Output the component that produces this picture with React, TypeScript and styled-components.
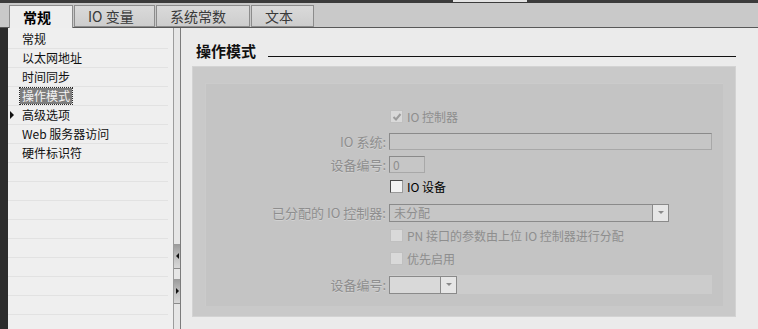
import React from 'react'
import styled, { createGlobalStyle } from 'styled-components'

const GlobalStyle = createGlobalStyle`
  html, body {
    margin: 0;
    padding: 0;
    background: #ebebeb;
  }
  body {
    font-family: "Noto Sans CJK SC", "Liberation Sans", sans-serif;
    font-size: 12px;
  }
`

const View = styled.div`
  width: 758px;
  height: 329px;
  display: flex;
  flex-direction: column;
  overflow: hidden;
  background: #ebebeb;
`

const TopBar = styled.div`
  height: 3px;
  background: #3b3b3b;
  display: flex;
`

const TopNotch = styled.div`
  margin-left: 453px;
  width: 74px;
  height: 2px;
  background: #e4e4e4;
`

const TabBar = styled.div`
  height: 24px;
  background: #c9c9c9;
  border-bottom: 1px solid #585858;
  display: flex;
  align-items: flex-end;
  padding-left: 9px;
  gap: 1px;
`

const Tab = styled.div<{ $active?: boolean; $w: number }>`
  box-sizing: border-box;
  height: ${(p) => (p.$active ? '23px' : '22px')};
  margin-bottom: ${(p) => (p.$active ? '-1px' : '0')};
  width: ${(p) => p.$w}px;
  padding-left: 13px;
  display: flex;
  align-items: center;
  font-size: 14px;
  font-weight: ${(p) => (p.$active ? 700 : 400)};
  color: ${(p) => (p.$active ? '#000' : '#3a3a3a')};
  background: ${(p) => (p.$active ? '#eeeeee' : 'linear-gradient(#dadada, #cdcdcd)')};
  border: 1px solid #8c8c8c;
  border-bottom: ${(p) => (p.$active ? 'none' : '1px solid #8c8c8c')};
`

const Body = styled.div`
  flex: 1;
  display: flex;
  min-height: 0;
`

const LeftEdge = styled.div`
  width: 8px;
  background: #2c2c2c;
`

const Nav = styled.div`
  width: 165px;
  background: #efefef;
  padding-top: 2px;
  box-sizing: border-box;
`

const NavRow = styled.div`
  width: 160px;
  height: 19px;
  box-sizing: border-box;
  border-bottom: 1px solid #e2e2e2;
  display: flex;
  align-items: center;
  position: relative;
  color: #000;
  font-size: 12px;
  white-space: nowrap;
`

const NavText = styled.span<{ $selected?: boolean }>`
  margin-left: ${(p) => (p.$selected ? '12px' : '14px')};
  padding: 0 ${(p) => (p.$selected ? '2px' : '0')};
  height: 16px;
  line-height: 16px;
  background: ${(p) => (p.$selected ? '#7e7e7e' : 'transparent')};
  color: ${(p) => (p.$selected ? '#f4f4f4' : '#111')};
  outline: ${(p) => (p.$selected ? '1px dotted #2a2a2a' : 'none')};
`

const Caret = styled.span`
  position: absolute;
  left: 2px;
  top: 5px;
  width: 0;
  height: 0;
  border-top: 4px solid transparent;
  border-bottom: 4px solid transparent;
  border-left: 4px solid #111;
`

const Splitter = styled.div`
  width: 8px;
  box-sizing: border-box;
  background: #e6e6e6;
  border-left: 1px solid #9c9c9c;
  border-right: 1px solid #7c7c7c;
  display: flex;
  flex-direction: column;
  padding-top: 216px;
  gap: 10px;
`

const SplitButton = styled.div<{ $dir: 'left' | 'right' }>`
  height: 24px;
  background: linear-gradient(#9a9a9a, #c4c4c4 60%, #d8d8d8);
  border-bottom: 1px solid #8a8a8a;
  display: flex;
  align-items: center;
  justify-content: center;
  &::after {
    content: '';
    width: 0;
    height: 0;
    border-top: 3px solid transparent;
    border-bottom: 3px solid transparent;
    ${(p) => (p.$dir === 'left' ? 'border-right: 3px solid #111;' : 'border-left: 3px solid #111;')}
  }
`

const Content = styled.div`
  flex: 1;
  display: flex;
  flex-direction: column;
  padding: 15px 22px 12px 11px;
  background: #ebebeb;
  min-width: 0;
`

const TitleRow = styled.div`
  display: flex;
  align-items: flex-end;
  gap: 12px;
  padding-left: 4px;
  height: 15px;
  margin-bottom: 8px;
`

const Title = styled.div`
  font-size: 15px;
  font-weight: 700;
  line-height: 15px;
  color: #111;
`

const TitleLine = styled.div`
  flex: 1;
  border-bottom: 1px solid #111;
  margin-bottom: 1px;
`

const OuterBox = styled.div`
  flex: 1;
  display: flex;
  flex-direction: column;
  background: #c9c9c9;
  border: 1px solid #d3d3d3;
  padding: 16px 12px 10px 12px;
`

const InnerBox = styled.div`
  flex: 1;
  background: #c4c4c4;
  border-top: 1px solid #cbcbcb;
  border-left: 1px solid #cbcbcb;
  padding-top: 24px;
  padding-right: 11px;
  display: flex;
  flex-direction: column;
`

const FormRow = styled.div<{ $top: number; $h?: number }>`
  display: grid;
  grid-template-columns: 183px 1fr;
  height: ${(p) => p.$h ?? 17}px;
  margin-top: ${(p) => p.$top}px;
  align-items: center;
`

const Label = styled.div`
  text-align: right;
  padding-right: 3px;
  color: #8e8e8e;
  font-size: 13px;
  white-space: nowrap;
  text-shadow: 0 1px 0 #d2d2d2;
`

const CheckLine = styled.label<{ $enabled?: boolean }>`
  display: flex;
  align-items: center;
  gap: 4px;
  padding-left: 1px;
  color: ${(p) => (p.$enabled ? '#000' : '#8e8e8e')};
  font-size: 12px;
  white-space: nowrap;
`

const Box = styled.span<{ $enabled?: boolean }>`
  width: 13px;
  height: 13px;
  box-sizing: border-box;
  display: inline-flex;
  align-items: center;
  justify-content: center;
  background: ${(p) => (p.$enabled ? '#f2f2f2' : '#d9d9d9')};
  border: 1px solid ${(p) => (p.$enabled ? '#4a4a4a' : '#c0c0c0')};
  border-right-color: ${(p) => (p.$enabled ? '#9a9a9a' : '#c0c0c0')};
  border-bottom-color: ${(p) => (p.$enabled ? '#9a9a9a' : '#c0c0c0')};
`

const Field = styled.div<{ $w?: number }>`
  box-sizing: border-box;
  height: 17px;
  width: ${(p) => (p.$w ? `${p.$w}px` : '100%')};
  border: 1px solid #8a8a8a;
  border-right-color: #a8a8a8;
  border-bottom-color: #a8a8a8;
  background: #c6c6c6;
  color: #8e8e8e;
  display: flex;
  align-items: center;
  padding-left: 3px;
  font-size: 12px;
`

const Select = styled.div<{ $w: number; $light?: boolean }>`
  box-sizing: border-box;
  height: 18px;
  width: ${(p) => p.$w}px;
  border: 1px solid #8a8a8a;
  background: ${(p) => (p.$light ? '#d9d9d9' : '#c6c6c6')};
  color: #8e8e8e;
  display: flex;
  align-items: center;
  font-size: 12px;
`

const SelectText = styled.span`
  flex: 1;
  padding-left: 4px;
`

const DropButton = styled.span`
  width: 16px;
  height: 100%;
  box-sizing: border-box;
  border-left: 1px solid #8a8a8a;
  background: #e6e6e6;
  display: flex;
  align-items: center;
  justify-content: center;
  &::after {
    content: '';
    width: 0;
    height: 0;
    border-left: 3px solid transparent;
    border-right: 3px solid transparent;
    border-top: 3px solid #8a8a8a;
  }
`

const Band = styled.div`
  height: 19px;
  background: #cccccc;
  display: flex;
  align-items: center;
`

const Check = () => (
  <svg width="10" height="10" viewBox="0 0 10 10">
    <path d="M1.5 5 L4 7.5 L8.5 2" fill="none" stroke="#9c9c9c" strokeWidth="2" />
  </svg>
)

const navItems = ['常规', '以太网地址', '时间同步', '操作模式', '高级选项', 'Web 服务器访问', '硬件标识符']

const App: React.FC = () => {
  return (
    <View>
      <GlobalStyle />
      <TopBar>
        <TopNotch />
      </TopBar>
      <TabBar>
        <Tab $active $w={64}>常规</Tab>
        <Tab $w={81}>IO 变量</Tab>
        <Tab $w={94}>系统常数</Tab>
        <Tab $w={63}>文本</Tab>
      </TabBar>
      <Body>
        <LeftEdge />
        <Nav>
          {navItems.map((item) => (
            <NavRow key={item}>
              {item === '高级选项' && <Caret />}
              <NavText $selected={item === '操作模式'}>{item}</NavText>
            </NavRow>
          ))}
          {Array.from({ length: 9 }).map((_, i) => (
            <NavRow key={'e' + i} />
          ))}
        </Nav>
        <Splitter>
          <SplitButton $dir="left" />
          <SplitButton $dir="right" />
        </Splitter>
        <Content>
          <TitleRow>
            <Title>操作模式</Title>
            <TitleLine />
          </TitleRow>
          <OuterBox>
            <InnerBox>
              <FormRow $top={0}>
                <span />
                <CheckLine>
                  <Box>
                    <Check />
                  </Box>
                  IO 控制器
                </CheckLine>
              </FormRow>
              <FormRow $top={7}>
                <Label>IO 系统:</Label>
                <Field />
              </FormRow>
              <FormRow $top={6}>
                <Label>设备编号:</Label>
                <Field $w={36}>0</Field>
              </FormRow>
              <FormRow $top={6}>
                <span />
                <CheckLine $enabled>
                  <Box $enabled />
                  IO 设备
                </CheckLine>
              </FormRow>
              <FormRow $top={8} $h={18}>
                <Label>已分配的 IO 控制器:</Label>
                <Select $w={280}>
                  <SelectText>未分配</SelectText>
                  <DropButton />
                </Select>
              </FormRow>
              <FormRow $top={5} $h={18}>
                <span />
                <CheckLine>
                  <Box />
                  PN 接口的参数由上位 IO 控制器进行分配
                </CheckLine>
              </FormRow>
              <FormRow $top={5} $h={18}>
                <span />
                <CheckLine>
                  <Box />
                  优先启用
                </CheckLine>
              </FormRow>
              <FormRow $top={8} $h={19}>
                <Label>设备编号:</Label>
                <Band>
                  <Select $w={68} $light>
                    <SelectText />
                    <DropButton />
                  </Select>
                </Band>
              </FormRow>
            </InnerBox>
          </OuterBox>
        </Content>
      </Body>
    </View>
  )
}

export default App
